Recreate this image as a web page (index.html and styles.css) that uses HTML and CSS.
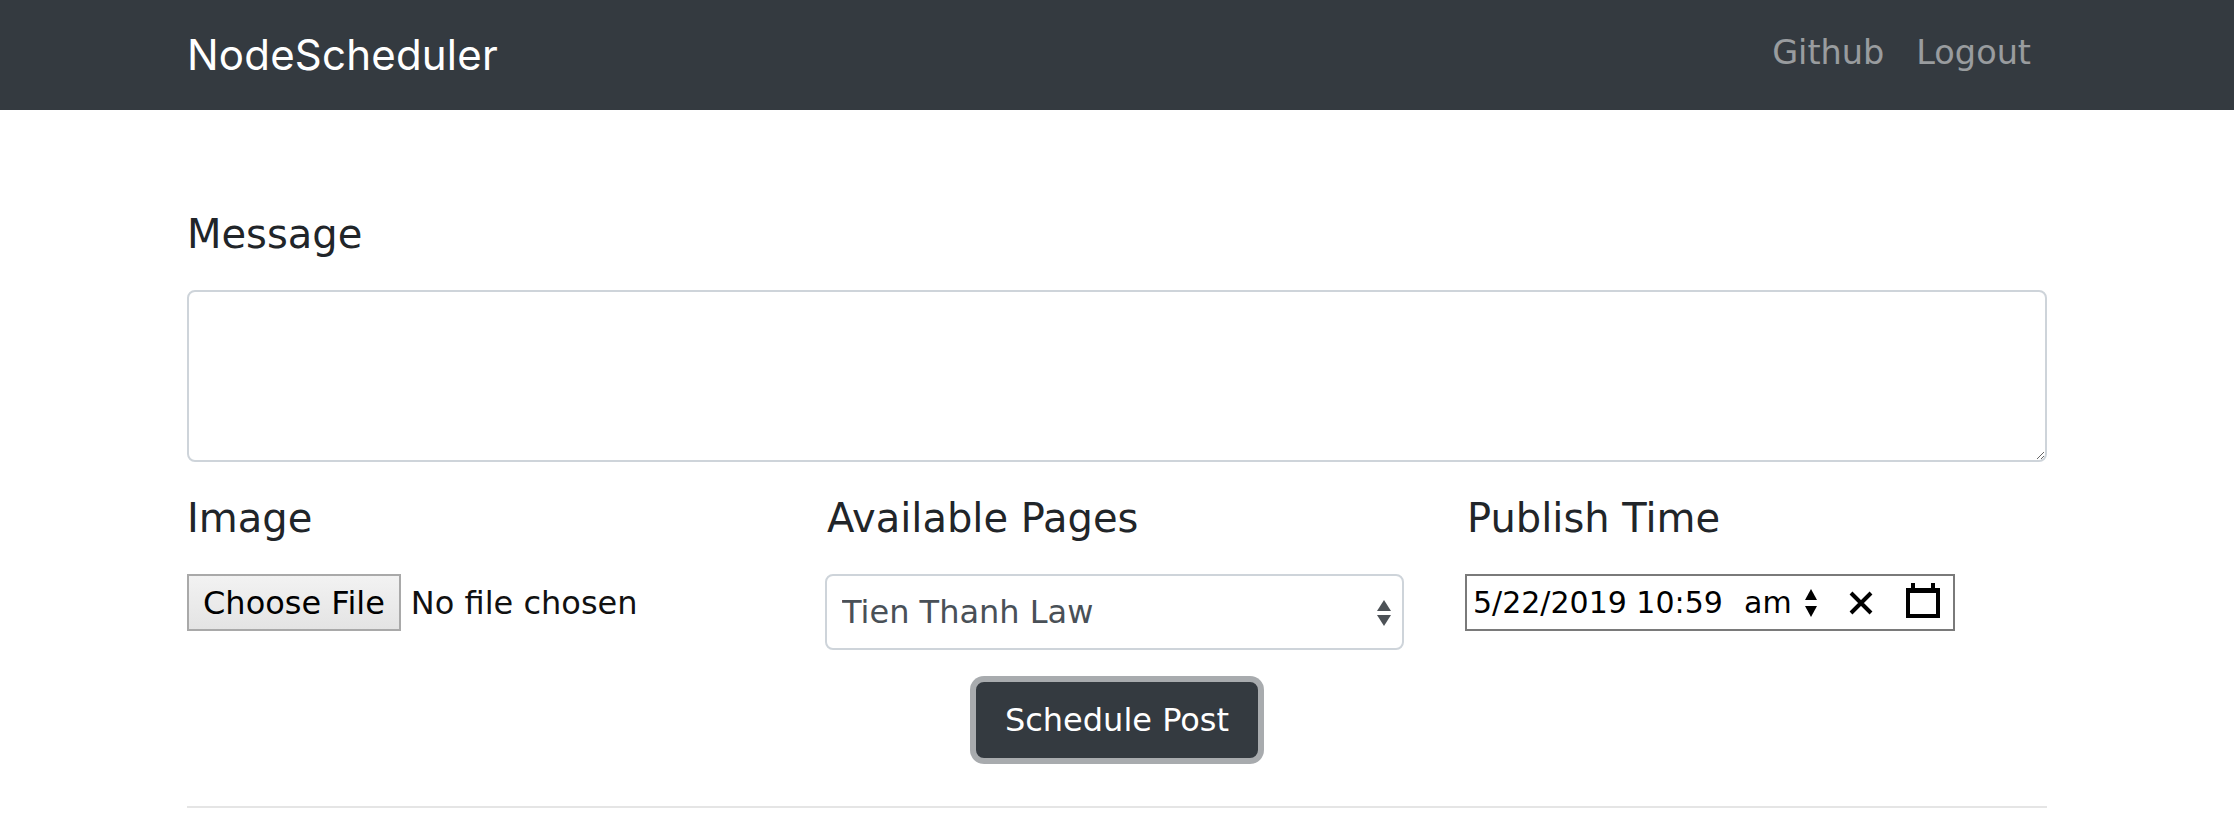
FILE: index.html
```html
<!DOCTYPE html>
<html lang="en">
<head>
<meta charset="utf-8">
<title>NodeScheduler</title>
<link rel="stylesheet" href="styles.css">
</head>
<body>
<nav class="navbar">
  <div class="container nav-inner">
    <a class="brand" href="#">NodeScheduler</a>
    <ul class="nav-links">
      <li><a href="#">Github</a></li>
      <li><a href="#">Logout</a></li>
    </ul>
  </div>
</nav>

<main class="container main">
  <form class="post-form">
    <div class="form-group">
      <label class="field-label" for="message">Message</label>
      <textarea id="message" class="textarea"></textarea>
    </div>

    <div class="row">
      <div class="col">
        <label class="field-label">Image</label>
        <div class="file-input">
          <span class="file-btn">Choose File</span>
          <span class="file-text">No file chosen</span>
        </div>
      </div>
      <div class="col">
        <label class="field-label" for="page">Available Pages</label>
        <div class="select-wrap">
          <select id="page" class="select">
            <option>Tien Thanh Law</option>
          </select>
          <svg class="select-arrows" width="14" height="26" viewBox="0 0 14 26" aria-hidden="true">
            <polygon points="7,0 14,11 0,11" fill="#4d5257"/>
            <polygon points="0,15 14,15 7,26" fill="#4d5257"/>
          </svg>
        </div>
      </div>
      <div class="col">
        <label class="field-label">Publish Time</label>
        <div class="datetime">
          <span class="dt-date">5/22/2019 10:59</span>
          <span class="dt-ampm">am</span>
          <svg class="dt-spin" width="12" height="28" viewBox="0 0 12 28" aria-hidden="true">
            <polygon points="6,0 12,11 0,11" fill="#000"/>
            <polygon points="0,17 12,17 6,28" fill="#000"/>
          </svg>
          <svg class="dt-clear" width="26" height="24" viewBox="0 0 26 24" aria-hidden="true">
            <path d="M3 2 L23 22 M23 2 L3 22" stroke="#000" stroke-width="4" fill="none"/>
          </svg>
          <svg class="dt-cal" width="34" height="35" viewBox="0 0 34 35" aria-hidden="true">
            <path fill-rule="evenodd" fill="#000" d="M0 5 H34 V35 H0 Z M4 10 V31 H30 V10 Z"/>
            <rect x="5" y="0" width="4" height="6" fill="#000"/>
            <rect x="25" y="0" width="4" height="6" fill="#000"/>
          </svg>
        </div>
      </div>
    </div>

    <div class="actions">
      <button type="button" class="btn-dark">Schedule Post</button>
    </div>
  </form>
  <hr class="divider">
</main>
</body>
</html>
```

FILE: styles.css
```css
* {
  box-sizing: border-box;
}

html, body {
  margin: 0;
  padding: 0;
}

body {
  font-family: "DejaVu Sans", "Open Sans", sans-serif;
  color: #212529;
  background: #fff;
  overflow: hidden;
}

.container {
  width: 100%;
  max-width: 1920px;
  margin: 0 auto;
  padding: 0 30px;
}

/* Navbar */
.navbar {
  background: #343a40;
  height: 110px;
}

.nav-inner {
  height: 100%;
  display: flex;
  align-items: center;
  justify-content: space-between;
}

.brand {
  font-family: Inter, "Noto Sans", sans-serif;
  font-size: 42px;
  line-height: 60px;
  color: #fff;
  text-decoration: none;
  letter-spacing: 0.2px;
}

.nav-links {
  display: flex;
  list-style: none;
  margin: 0;
  padding: 0 0 4px 0;
}

.nav-links a {
  display: block;
  padding: 0 16px;
  font-size: 33.5px;
  line-height: 48px;
  color: rgba(255, 255, 255, 0.5);
  text-decoration: none;
}

/* Form */
.main {
  padding-top: 100px;
}

.field-label {
  display: block;
  font-size: 40px;
  line-height: 48px;
  margin: 0 0 32px 0;
  color: #212529;
}

.form-group {
  margin-bottom: 32px;
}

.textarea {
  display: block;
  width: 100%;
  height: 172px;
  border: 2px solid #ced4da;
  border-radius: 8px;
  padding: 12px 24px;
  font-family: inherit;
  font-size: 32px;
  color: #495057;
  resize: vertical;
  outline: none;
}

.row {
  display: grid;
  grid-template-columns: repeat(3, 1fr);
  column-gap: 60px;
  margin-bottom: 32px;
}

/* File input */
.file-input {
  display: flex;
  align-items: center;
  height: 57px;
  font-size: 32px;
}

.file-btn {
  display: flex;
  align-items: center;
  height: 57px;
  padding: 0 14px;
  border: 2px solid #a9a9a9;
  background: linear-gradient(#f2f2f2, #e4e4e4);
  color: #000;
}

.file-text {
  margin-left: 10px;
  color: #111;
}

/* Select */
.select-wrap {
  position: relative;
  margin: 0 3px 0 -2px;
}

.select {
  display: block;
  width: 100%;
  height: 76px;
  border: 2px solid #ced4da;
  border-radius: 8px;
  background: #fff;
  padding: 0 60px 0 15px;
  font-family: inherit;
  font-size: 32px;
  color: #495057;
  appearance: none;
  -webkit-appearance: none;
  outline: none;
}

.select-arrows {
  position: absolute;
  right: 13px;
  top: 26px;
  pointer-events: none;
}

/* Datetime */
.datetime {
  display: flex;
  align-items: center;
  width: 490px;
  height: 57px;
  margin-left: -2px;
  border: 2px solid #7a7a7a;
  padding-left: 6px;
  font-size: 30px;
  color: #000;
  white-space: nowrap;
}

.dt-date {
  display: inline-block;
  width: 271px;
}

.dt-ampm {
  display: inline-block;
  width: 58px;
}

.dt-spin {
  margin-left: 3px;
  flex: none;
}

.dt-clear {
  margin-left: 31px;
  flex: none;
}

.dt-cal {
  margin-left: 32px;
  margin-top: -4px;
  flex: none;
}

/* Button */
.actions {
  text-align: center;
}

.btn-dark {
  display: inline-block;
  background: #343a40;
  color: #fff;
  border: 2px solid #343a40;
  border-radius: 8px;
  padding: 12px 27px;
  font-family: inherit;
  font-size: 32px;
  line-height: 48px;
  box-shadow: 0 0 0 6px rgba(82, 88, 93, 0.5);
  cursor: pointer;
}

.divider {
  margin: 48px 0 0 0;
  border: 0;
  border-top: 2px solid rgba(0, 0, 0, 0.1);
}
```
